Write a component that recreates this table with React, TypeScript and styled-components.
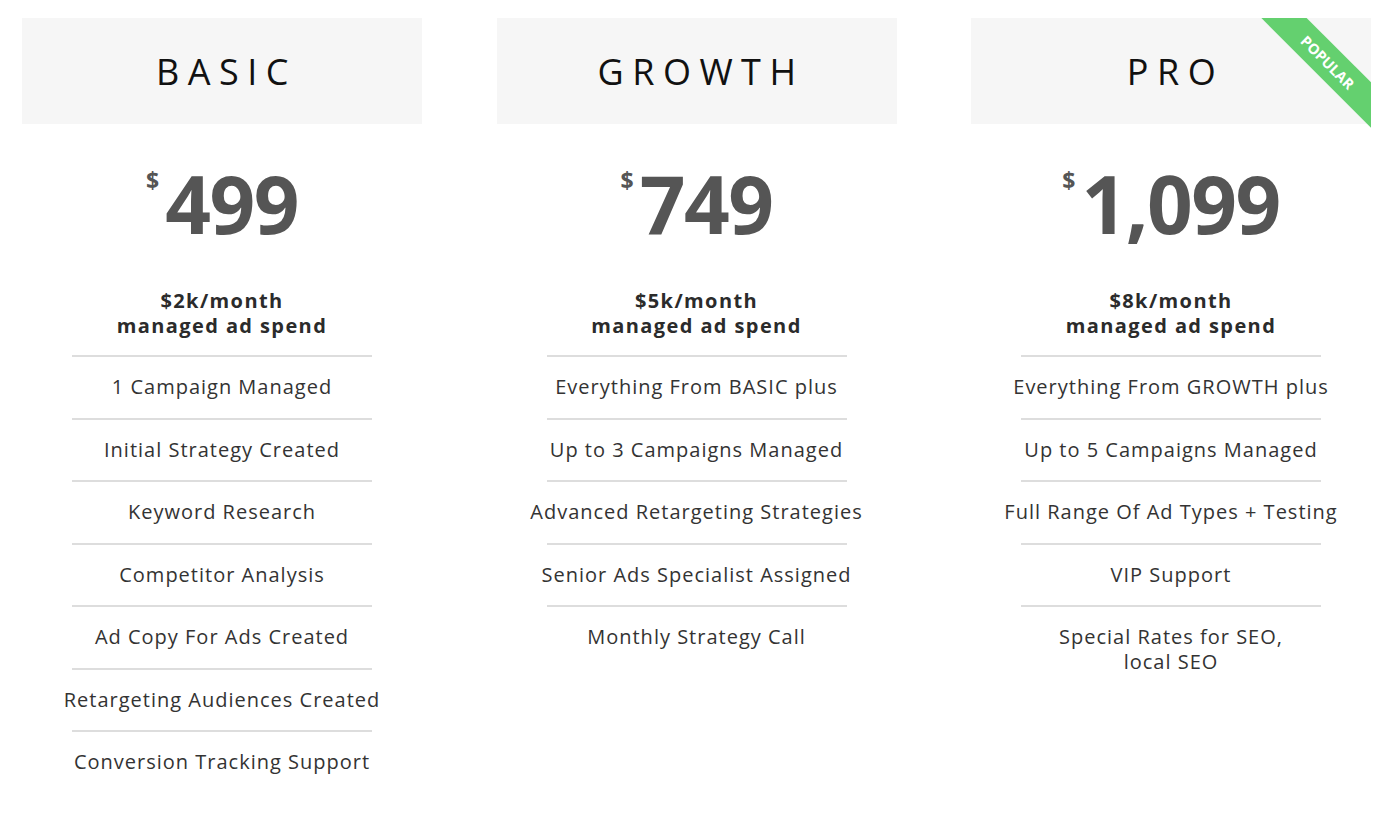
import styled, { createGlobalStyle } from "styled-components"

const GlobalStyle = createGlobalStyle`
  body {
    margin: 0;
    background: #fff;
    font-family: "Open Sans", "Liberation Sans", sans-serif;
    color: #333;
  }
`

const Page = styled.div`
  display: grid;
  grid-template-columns: repeat(3, 400px);
  column-gap: 74.5px;
  padding: 18px 0 0 22px;
`

const Plan = styled.section`
  display: flex;
  flex-direction: column;
  align-items: center;
`

const PlanHeader = styled.header`
  position: relative;
  align-self: stretch;
  height: 106px;
  background: #f6f6f6;
  display: flex;
  align-items: center;
  justify-content: center;
`

const PlanName = styled.h2`
  margin: 0 0 0 9px;
  font-size: 36px;
  font-weight: 400;
  letter-spacing: 8.5px;
  color: #111;
`

const RibbonClip = styled.div`
  position: absolute;
  top: 0;
  right: 0;
  width: 110px;
  height: 110px;
  overflow: hidden;
`

const Ribbon = styled.div`
  position: absolute;
  left: -13.5px;
  top: 27.5px;
  width: 160px;
  height: 32px;
  background: #64d06f;
  transform: rotate(45deg);
  display: flex;
  align-items: center;
  justify-content: center;
  color: #fff;
  font-size: 14.5px;
  font-weight: 700;
`

const Price = styled.div`
  display: flex;
  align-items: flex-start;
  margin-top: 39px;
  color: #555;
  font-weight: 700;
`

const Currency = styled.span`
  font-size: 23px;
  line-height: 23px;
  margin: 6px 6px 0 0;
`

const Amount = styled.span`
  font-size: 80px;
  line-height: 80px;
  letter-spacing: -1.5px;
`

const Spend = styled.p`
  margin: 45px 0 0;
  text-align: center;
  font-size: 20px;
  line-height: 25px;
  font-weight: 700;
  letter-spacing: 1.4px;
  color: #2b2b2b;
`

const Features = styled.ul`
  list-style: none;
  margin: 17px 0 0;
  padding: 0;
  width: 300px;
`

const Feature = styled.li`
  display: flex;
  justify-content: center;
  box-sizing: border-box;
  padding: 18px 0;
  border-top: 2px solid #dddddd;
  font-size: 20px;
  font-weight: 400;
  letter-spacing: 1px;
  line-height: 24.5px;
  color: #333;
`

const FeatureText = styled.span`
  white-space: nowrap;
  text-align: center;
`

type PlanData = {
  name: string
  price: string
  spend: string
  popular?: boolean
  features: string[][]
}

const plans: PlanData[] = [
  {
    name: "BASIC",
    price: "499",
    spend: "$2k/month",
    features: [
      ["1 Campaign Managed"],
      ["Initial Strategy Created"],
      ["Keyword Research"],
      ["Competitor Analysis"],
      ["Ad Copy For Ads Created"],
      ["Retargeting Audiences Created"],
      ["Conversion Tracking Support"],
    ],
  },
  {
    name: "GROWTH",
    price: "749",
    spend: "$5k/month",
    features: [
      ["Everything From BASIC plus"],
      ["Up to 3 Campaigns Managed"],
      ["Advanced Retargeting Strategies"],
      ["Senior Ads Specialist Assigned"],
      ["Monthly Strategy Call"],
    ],
  },
  {
    name: "PRO",
    price: "1,099",
    spend: "$8k/month",
    popular: true,
    features: [
      ["Everything From GROWTH plus"],
      ["Up to 5 Campaigns Managed"],
      ["Full Range Of Ad Types + Testing"],
      ["VIP Support"],
      ["Special Rates for SEO,", "local SEO"],
    ],
  },
]

export default function App() {
  return (
    <>
      <GlobalStyle />
      <Page>
        {plans.map(plan => (
          <Plan key={plan.name}>
            <PlanHeader>
              <PlanName>{plan.name}</PlanName>
              {plan.popular && (
                <RibbonClip>
                  <Ribbon>POPULAR</Ribbon>
                </RibbonClip>
              )}
            </PlanHeader>
            <Price>
              <Currency>$</Currency>
              <Amount>{plan.price}</Amount>
            </Price>
            <Spend>
              {plan.spend}
              <br />
              managed ad spend
            </Spend>
            <Features>
              {plan.features.map(lines => (
                <Feature key={lines[0]}>
                  <FeatureText>
                    {lines.map((line, i) => (
                      <span key={line}>
                        {i > 0 && <br />}
                        {line}
                      </span>
                    ))}
                  </FeatureText>
                </Feature>
              ))}
            </Features>
          </Plan>
        ))}
      </Page>
    </>
  )
}
